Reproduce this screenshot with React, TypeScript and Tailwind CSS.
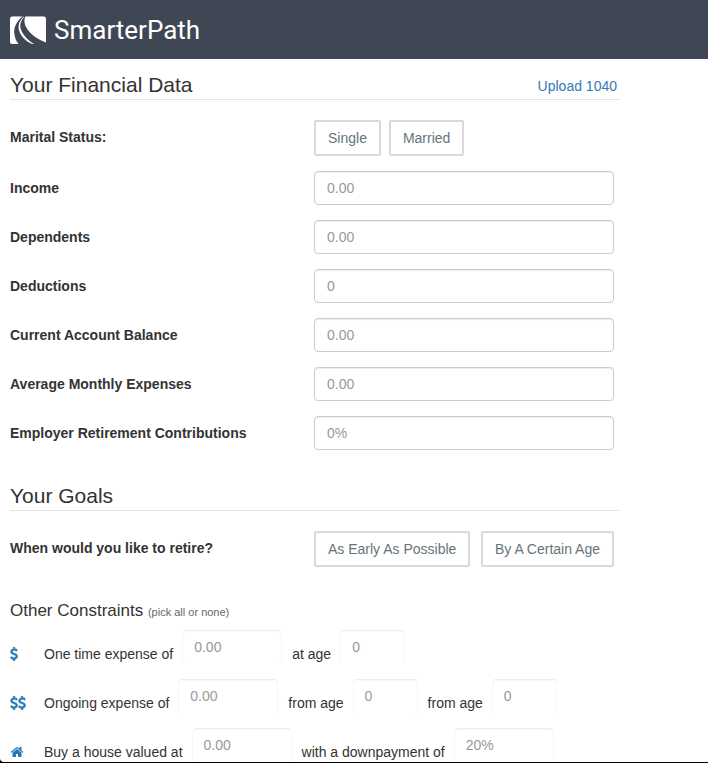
import { ButtonHTMLAttributes, FC, Fragment, InputHTMLAttributes, ReactNode } from "react";

const fields = [
  { id: "income", label: "Income", placeholder: "0.00" },
  { id: "dependents", label: "Dependents", placeholder: "0.00" },
  { id: "deductions", label: "Deductions", placeholder: "0" },
  { id: "balance", label: "Current Account Balance", placeholder: "0.00" },
  { id: "expenses", label: "Average Monthly Expenses", placeholder: "0.00" },
  { id: "employer", label: "Employer Retirement Contributions", placeholder: "0%" },
];

const Logo: FC = () => (
  <svg className="h-7 w-9" viewBox="0 0 36 28" aria-hidden="true">
    <rect width="36" height="28" rx="2.5" fill="#8b919a" />
    <path d="M0 3Q0 .7 2.500 .7H33.500Q36 .7 36 3V25.500Q36 28 33.500 28H2.500Q0 28 0 25.500Z" fill="#fff" />
    <path
      d="M13 0C8 4 4 10 4.200 16C4.400 21 6 25 8.500 28H36V26.500C28 23.500 21.500 19 17.500 13.500C14.500 9 13.500 4.500 15.500 0Z"
      fill="#3e4753"
    />
    <path
      d="M13.500 .7C9.500 4.500 8 8.500 8.700 13C10.200 20 15.500 25 22 28H24C17.500 24 12.500 18.500 10.600 12.500C9.600 8 11 4.500 14.300 .7Z"
      fill="#fff"
    />
  </svg>
);

const DollarIcon: FC = () => (
  <svg className="h-3.5 w-2" viewBox="384 0 1024 1792" fill="currentColor" aria-hidden="true">
    <path
      stroke="currentColor"
      strokeWidth="50"
      d="M1362 1185q0 153-99.500 263.500t-258.500 136.500v175q0 14-9 23t-23 9h-135q-13 0-22.500-9.500t-9.500-22.500v-175q-66-9-127.500-31t-101.500-44.500-74-48-46.500-37.500-17.500-18q-17-21-2-41l103-135q7-10 23-12 15-2 24 9l2 2q113 99 243 125 37 8 74 8 81 0 142.500-43t61.500-122q0-28-15-53t-33.500-42-58.500-37.500-66-32-80-32.500q-39-16-61.500-25t-61.500-26.500-62.500-31-56.500-35.500-53.500-42.500-43.500-49-35.500-58-21-66.500-8.500-78q0-138 98-242t255-134v-180q0-13 9.500-22.500t22.500-9.500h135q14 0 23 9t9 23v176q57 6 110.500 23t87 33.500 63.500 37.500 39 29 15 14q17 18 5 38l-81 146q-8 15-23 16-14 3-27-7-3-3-14.500-12t-39-26.500-58.500-32-74.500-26-85.500-11.500q-95 0-155 43t-60 111q0 26 8.500 48t29.500 41.500 39.500 33 56 31 60.500 27 70 27.500q53 20 81 31.500t76 35 75.500 42.500 62 50 53 63.500 31.500 76.500 13 94z"
    />
  </svg>
);

const HomeIcon: FC = () => (
  <svg className="size-3.5" viewBox="0 0 1792 1792" fill="currentColor" aria-hidden="true">
    <path d="M1472 992v480q0 26-19 45t-45 19h-384v-384h-256v384h-384q-26 0-45-19t-19-45v-480q0-1 .5-3t.5-3l575-474 575 474q1 2 1 6zm223-69l-62 74q-8 9-21 11h-3q-13 0-21-7l-692-577-692 577q-12 8-24 7-13-2-21-11l-62-74q-8-10-7-23.500t11-21.500l719-599q32-26 76-26t76 26l244 204v-195q0-14 9-23t23-9h192q14 0 23 9t9 23v408l219 182q10 8 11 21.500t-7 23.500z" />
  </svg>
);

const constraints = [
  {
    id: "one-time",
    icon: <DollarIcon />,
    parts: [
      { text: "One time expense of", placeholder: "0.00", wide: true },
      { text: "at age", placeholder: "0", wide: false },
    ],
  },
  {
    id: "ongoing",
    icon: (
      <>
        <DollarIcon />
        <DollarIcon />
      </>
    ),
    parts: [
      { text: "Ongoing expense of", placeholder: "0.00", wide: true },
      { text: "from age", placeholder: "0", wide: false },
      { text: "from age", placeholder: "0", wide: false },
    ],
  },
  {
    id: "house",
    icon: <HomeIcon />,
    parts: [
      { text: "Buy a house valued at", placeholder: "0.00", wide: true },
      { text: "with a downpayment of", placeholder: "20%", wide: true },
    ],
  },
];

const ChoiceButton: FC<ButtonHTMLAttributes<HTMLButtonElement>> = (props) => (
  <button
    type="button"
    className="rounded-xs border-2 border-[#dcd8da] bg-white px-3 py-1.5 leading-5 text-[#66757a]"
    {...props}
  />
);

const TextField: FC<InputHTMLAttributes<HTMLInputElement>> = (props) => (
  <input
    type="text"
    className="h-[34px] w-full rounded border border-[#ccc] px-3 text-[#555] shadow-[inset_0_1px_1px_rgba(0,0,0,0.075)] placeholder:text-[#999]"
    {...props}
  />
);

const SectionTitle: FC<{ title: string; children?: ReactNode }> = ({ title, children }) => (
  <div className="flex items-center justify-between border-b border-[#e5e5e5] pr-[3px] pb-0.5">
    <h2 className="text-[21px] leading-6">{title}</h2>
    {children}
  </div>
);

const App: FC = () => {
  return (
    <div className="min-h-screen bg-black pb-px font-['Liberation_Sans',Arial,sans-serif] text-sm text-[#333]">
      <div className="min-h-[calc(100vh-1px)] rounded-bl bg-white">
        <header className="flex h-[59px] items-center gap-2 bg-[#3e4753] px-2.5">
          <Logo />
          <h1 className="font-[Roboto,sans-serif] text-[26px] leading-8 text-white">SmarterPath</h1>
        </header>

        <main className="max-w-[630px] px-2.5 pt-3.5">
          <SectionTitle title="Your Financial Data">
            <a href="#upload" className="pt-0.5 text-[#337ab7]">
              Upload 1040
            </a>
          </SectionTitle>

          <div className="mt-5 grid grid-cols-[304px_minmax(0,1fr)] items-center gap-y-[15px] pr-1.5">
            <span id="marital" className="pb-0.5 font-bold">
              Marital Status:
            </span>
            <div role="group" aria-labelledby="marital" className="flex gap-2">
              <ChoiceButton>Single</ChoiceButton>
              <ChoiceButton>Married</ChoiceButton>
            </div>
            {fields.map((field) => (
              <Fragment key={field.id}>
                <label htmlFor={field.id} className="font-bold">
                  {field.label}
                </label>
                <TextField id={field.id} placeholder={field.placeholder} />
              </Fragment>
            ))}
          </div>

          <div className="mt-[34px]">
            <SectionTitle title="Your Goals" />
          </div>

          <div className="mt-5 grid grid-cols-[304px_minmax(0,1fr)] items-center pr-1.5">
            <span id="retire" className="pb-0.5 font-bold">
              When would you like to retire?
            </span>
            <div role="group" aria-labelledby="retire" className="flex justify-between">
              <ChoiceButton>As Early As Possible</ChoiceButton>
              <ChoiceButton>By A Certain Age</ChoiceButton>
            </div>
          </div>

          <h3 className="mt-[34px] text-[17px] leading-5">
            Other Constraints <small className="text-[11px] text-[#666]">(pick all or none)</small>
          </h3>

          <div className="mt-2 flex flex-col gap-[15px]">
            {constraints.map((row) => (
              <div key={row.id} className="flex items-start">
                <div className="flex w-[34px] pt-[17px] text-[#2878b5]">{row.icon}</div>
                <div className="flex gap-2.5">
                  {row.parts.map((part, i) => (
                    <label key={i} className="flex gap-[9px]">
                      <span className="pt-3.5 leading-5">{part.text}</span>
                      <input
                        type="text"
                        placeholder={part.placeholder}
                        className={`h-[34px] rounded border border-b-0 border-[#f7f7f7] border-t-[#eee] px-[11px] pb-0.5 shadow-[inset_0_1px_1px_rgba(0,0,0,0.03)] placeholder:text-[#999] ${
                          part.wide ? "w-[100px]" : "w-[65px]"
                        }`}
                      />
                    </label>
                  ))}
                </div>
              </div>
            ))}
          </div>
        </main>
      </div>
    </div>
  );
};

export default App;
